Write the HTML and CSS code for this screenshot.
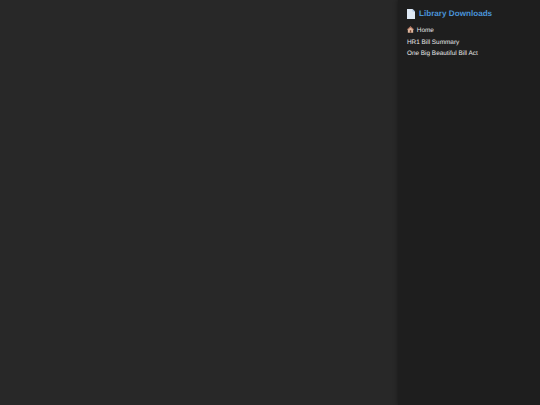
FILE: index.html
```html
<!DOCTYPE html>
<html lang="en">
<head>
    <meta charset="UTF-8">
    <meta name="viewport" content="width=device-width, initial-scale=1.0">
    <title>Library Downloads</title>
    <link rel="stylesheet" href="styles.css">
</head>
<body>
    <div class="layout">
        <main class="content"></main>
        <aside class="sidebar">
            <h2 class="sidebar-title">
                <svg class="doc-icon" viewBox="0 0 8 10" aria-hidden="true">
                    <path d="M0 0H5.5L8 2.5V10H0Z" fill="#dfe9f5"/>
                    <path d="M5.5 0V2.5H8Z" fill="#a9c4e4"/>
                </svg>
                Library Downloads
            </h2>
            <nav class="sidebar-links">
                <a href="#">
                    <svg class="home-icon" viewBox="0 0 10 10" aria-hidden="true">
                        <path d="M5 0.5L10 5H8.8V9.5H1.2V5H0Z" fill="#e0b9a0"/>
                        <path d="M5 0.5L10 5H8.5L5 2.2L1.5 5H0Z" fill="#9a5a48"/>
                        <path d="M4 6H6V9.5H4Z" fill="#7a4a36"/>
                    </svg>
                    Home
                </a>
                <a href="#">HR1 Bill Summary</a>
                <a href="#">One Big Beautiful Bill Act</a>
            </nav>
        </aside>
    </div>
</body>
</html>
```

FILE: styles.css
```css
html, body {
    height: 100%;
}
body {
    margin: 0;
    background-color: #282828;
    font-family: "Liberation Sans", Arial, sans-serif;
    color: #eee;
    text-rendering: geometricPrecision;
}
.layout {
    display: flex;
    height: 100%;
}
.content {
    flex: 1;
}
.sidebar {
    width: 142px;
    box-sizing: border-box;
    padding: 8px 8px 0 8px;
    background-color: #1e1e1e;
    box-shadow: -1px 0 4px rgba(0,0,0,0.3);
}
.sidebar-title {
    display: flex;
    align-items: center;
    gap: 4px;
    margin: 0 0 6px 0;
    padding-left: 1px;
    font-size: 8.15px;
    line-height: 12px;
    font-weight: bold;
    color: #4a94d8;
    white-space: nowrap;
}
.doc-icon {
    width: 8px;
    height: 10px;
}
.sidebar-links {
    display: flex;
    flex-direction: column;
    gap: 2.5px;
    padding-left: 1px;
}
.sidebar-links a {
    font-size: 6.4px;
    line-height: 9px;
    color: #e6e6e6;
    text-decoration: none;
    white-space: nowrap;
}
.home-icon {
    width: 7px;
    height: 7px;
    margin-right: 1px;
    vertical-align: -1px;
}
```
